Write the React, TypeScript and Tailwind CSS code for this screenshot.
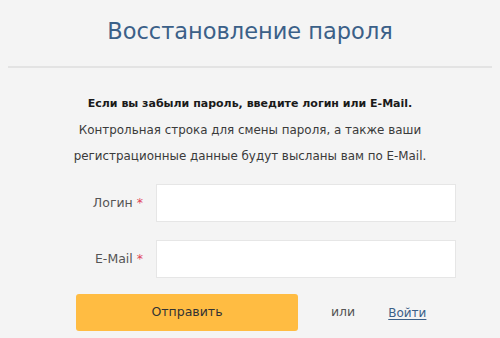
export default function App() {
  const font = { fontFamily: '"DejaVu Sans", "Noto Sans", sans-serif' };
  return (
    <div className="w-[500px] h-[338px] bg-[#f4f4f4] overflow-hidden" style={font}>
      <div className="mx-2 h-[68px] border-b-2 border-[#e3e3e3] flex items-start justify-center pt-[15px]">
        <h1 className="text-[22.5px] leading-[32px] text-[#3b6088] font-normal">Восстановление пароля</h1>
      </div>
      <div className="pt-[23px] flex flex-col items-center leading-[26px]">
        <p className="font-bold text-[11px] text-[#1a1a1a]">Если вы забыли пароль, введите логин или E-Mail.</p>
        <p className="text-[11.9px] text-[#3a3a3a]">Контрольная строка для смены пароля, а также ваши</p>
        <p className="text-[11.9px] text-[#3a3a3a]">регистрационные данные будут высланы вам по E-Mail.</p>
      </div>
      <div className="mt-[15px] flex flex-col gap-[18px]">
        <div className="flex items-center">
          <label className="w-[143px] text-right text-[12.5px] text-[#555]">
            Логин <span className="text-[#e0445a]">*</span>
          </label>
          <input className="ml-[13px] w-[300px] h-[38px] bg-white border border-[#e6e6e6] outline-none" />
        </div>
        <div className="flex items-center">
          <label className="w-[143px] text-right text-[12.5px] text-[#555]">
            E-Mail <span className="text-[#e0445a]">*</span>
          </label>
          <input className="ml-[13px] w-[300px] h-[38px] bg-white border border-[#e6e6e6] outline-none" />
        </div>
      </div>
      <div className="mt-[16px] flex items-center">
        <button className="ml-[76px] w-[222px] h-[37px] bg-[#ffbc42] rounded-[3px] text-[12.5px] text-[#333]">
          Отправить
        </button>
        <span className="ml-[33px] text-[12.5px] text-[#555]">или</span>
        <a className="ml-[33px] text-[12px] text-[#3b6088] underline underline-offset-2">Войти</a>
      </div>
    </div>
  );
}
